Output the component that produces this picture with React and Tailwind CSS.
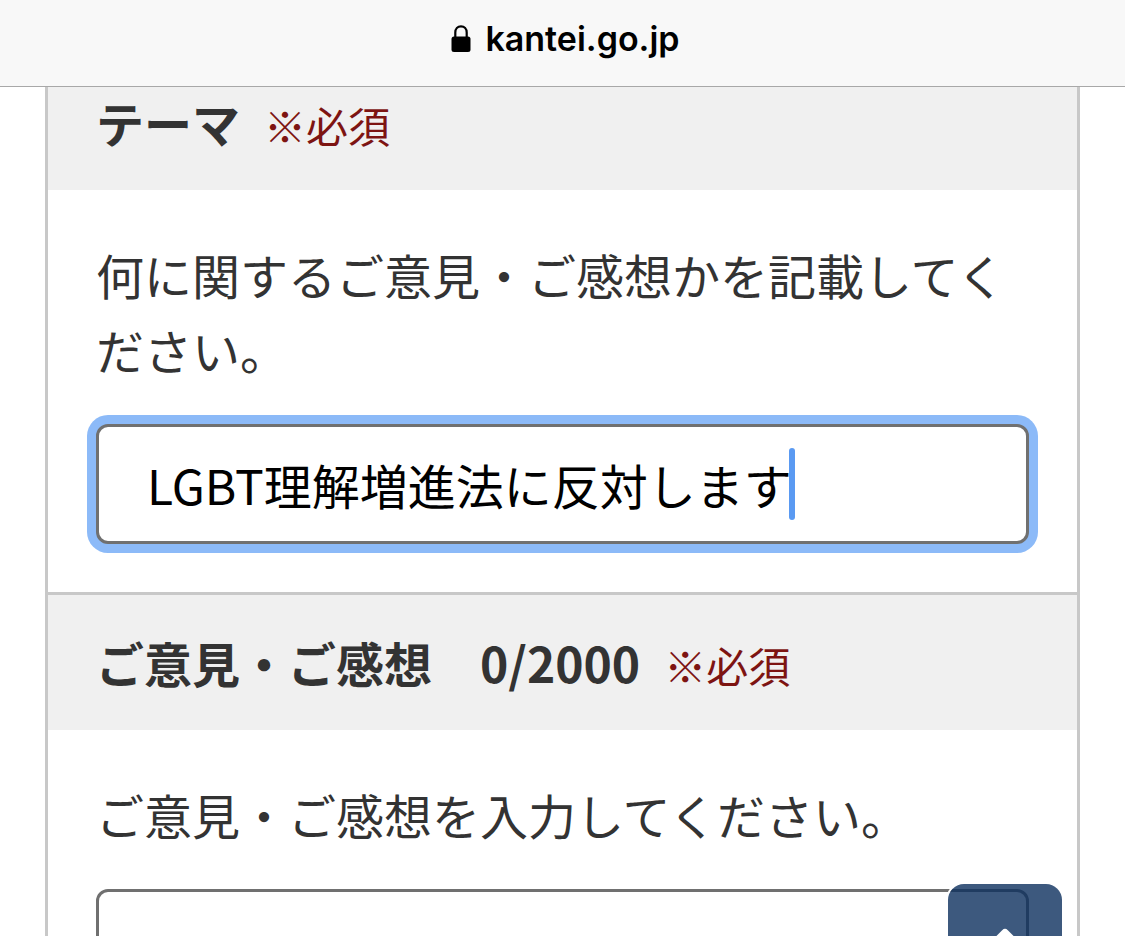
import { useState } from "react";

function LockIcon() {
  return (
    <svg viewBox="0 0 20 28" className="h-7 w-5 shrink-0" aria-hidden="true">
      <path
        d="M4.3 13V7.6C4.3 3.9 6.7 1.4 10 1.4s5.7 2.5 5.7 6.2V13"
        fill="none"
        stroke="currentColor"
        strokeWidth="2.2"
      />
      <rect x="0.5" y="11.5" width="19" height="15.5" rx="2.5" fill="currentColor" />
    </svg>
  );
}

function SectionHeader({ htmlFor, title, count }) {
  return (
    <div className="flex h-[135px] items-baseline bg-[#f0f0f0] px-12 pt-[30px]">
      <label htmlFor={htmlFor} className="text-[48px] leading-[75px] font-bold whitespace-pre">
        {title}
        {count && <span className="ml-12">{count}</span>}
      </label>
      <span className="ml-6 text-[42px] leading-[75px] text-[#7d1412]">※必須</span>
    </div>
  );
}

export default function App() {
  const [theme, setTheme] = useState("LGBT理解増進法に反対します");
  const [opinion, setOpinion] = useState("");

  return (
    <div className="flex h-screen flex-col overflow-hidden bg-white font-['Noto_Sans_CJK_JP',sans-serif] text-[#333333]">
      <header className="z-10 flex h-[87px] shrink-0 items-center justify-center gap-3.5 border-b border-[#a8a8a8] bg-[#f8f8f8] pb-2 pl-1.5 text-black">
        <LockIcon />
        <span className="font-['Inter',sans-serif] text-[34px] leading-[48px] font-semibold">
          kantei.go.jp
        </span>
      </header>

      <main className="min-h-0 flex-1 overflow-hidden">
        <form className="mx-[45px] -mt-[35px] border-[3px] border-[#c8c8c8]">
          <section>
            <SectionHeader htmlFor="theme" title="テーマ" />
            <div className="px-12 pt-[47px] pb-12">
              <p className="text-[48px] leading-[75px]">
                何に関するご意見・ご感想かを記載してください。
              </p>
              <div className="relative mt-[37px]">
                <input
                  id="theme"
                  type="text"
                  value={theme}
                  onChange={(e) => setTheme(e.target.value)}
                  className="block h-[120px] w-full rounded-xl border-[3px] border-[#707070] bg-white px-12 text-[48px] text-black caret-transparent shadow-[0_0_0_9px_#8cbaf8] outline-none"
                />
                <span className="pointer-events-none absolute top-6 left-[693px] h-[72px] w-1.5 rounded-sm bg-[#5a9af2]" />
              </div>
            </div>
          </section>

          <section className="border-t-[3px] border-[#c8c8c8]">
            <SectionHeader htmlFor="opinion" title="ご意見・ご感想" count="0/2000" />
            <div className="px-12 pt-[47px] pb-12">
              <p className="text-[48px] leading-[75px]">ご意見・ご感想を入力してください。</p>
              <textarea
                id="opinion"
                rows={6}
                value={opinion}
                onChange={(e) => setOpinion(e.target.value)}
                className="mt-[37px] block w-full resize-none rounded-xl border-[3px] border-[#707070] bg-white px-12 py-6 text-[48px] text-black outline-none"
              />
            </div>
          </section>
        </form>
      </main>

      <button
        type="button"
        aria-label="ページの先頭へ戻る"
        className="fixed right-[63px] -bottom-[62px] flex size-[114px] items-center justify-center rounded-2xl bg-[#0d305e]/80 text-white shadow-[0_0_0_2px_#ffffff]"
      >
        <svg viewBox="0 0 48 30" className="h-[30px] w-12" aria-hidden="true">
          <path
            d="M5 26 24 7l19 19"
            fill="none"
            stroke="currentColor"
            strokeWidth="8"
            strokeLinejoin="round"
            strokeLinecap="round"
          />
        </svg>
      </button>
    </div>
  );
}
